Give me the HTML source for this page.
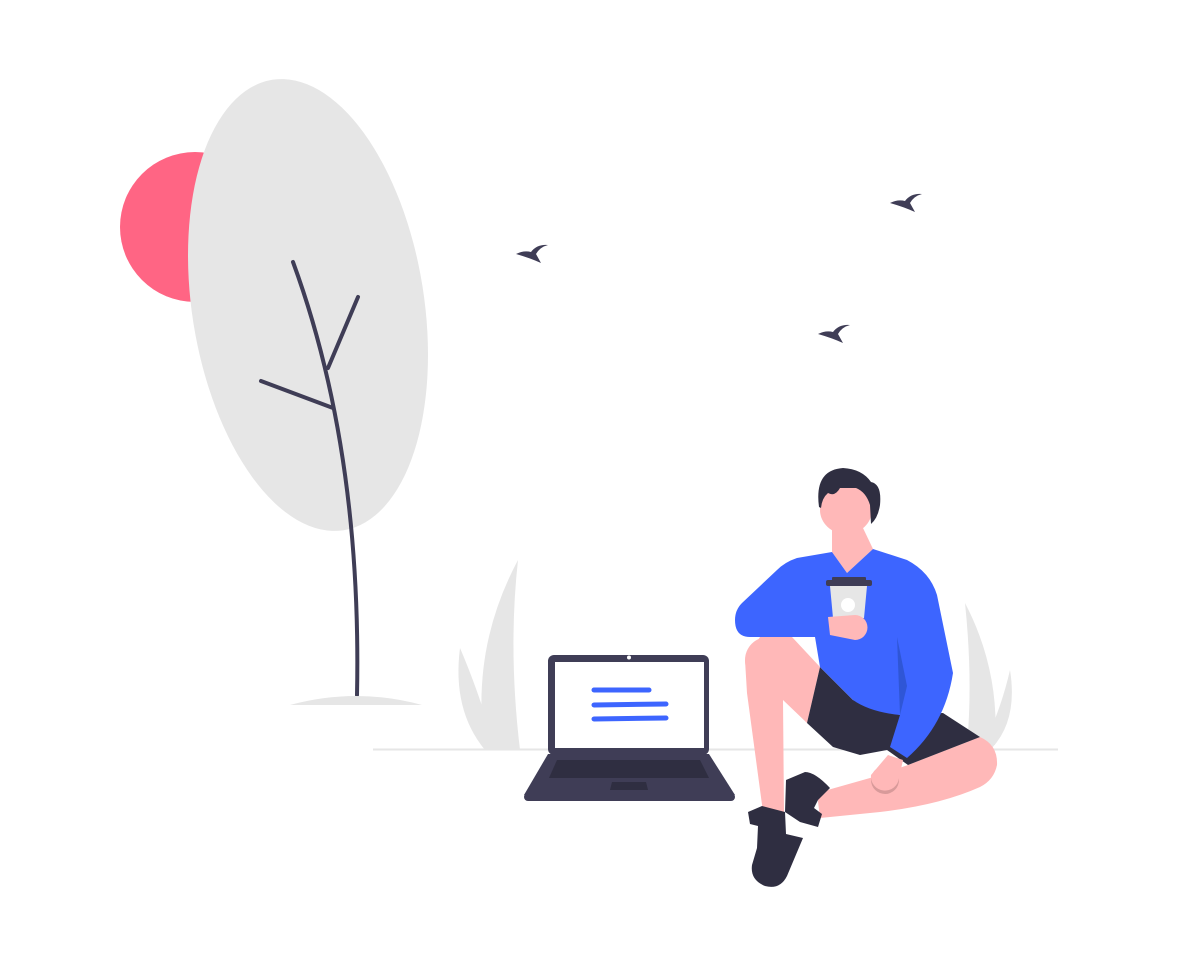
<!DOCTYPE html>
<html><head><meta charset="utf-8"><style>html,body{margin:0;padding:0;background:#fff;}svg{display:block}</style></head>
<body>
<svg width="1179" height="967" viewBox="0 0 1179 967" xmlns="http://www.w3.org/2000/svg">
<circle cx="195" cy="227" r="75" fill="#ff6584"/>
<ellipse cx="308" cy="305" rx="116" ry="228" transform="rotate(-9 308 305)" fill="#e6e6e6"/>
<path d="M293,262 Q362,450 357,695" fill="none" stroke="#3f3d56" stroke-width="4" stroke-linecap="round"/>
<path d="M358,297 L328,368" stroke="#3f3d56" stroke-width="4" stroke-linecap="round"/>
<path d="M261,381 L333,408" stroke="#3f3d56" stroke-width="4" stroke-linecap="round"/>
<path d="M290,705 Q356,687 422,705 Z" fill="#e6e6e6"/>
<line x1="373" y1="749.5" x2="1058" y2="749.5" stroke="#e6e6e6" stroke-width="2"/>
<path d="M518,560 Q470,650 485,750 L520,750 Q508,650 518,560Z" fill="#e6e6e6"/>
<path d="M460,648 Q452,710 485,750 L492,738 Q478,690 460,648Z" fill="#e6e6e6"/>
<path d="M965,603 Q1000,670 995,745 L967,745 Q973,680 965,603Z" fill="#e6e6e6"/>
<path d="M1010,670 Q1018,720 992,748 L987,738 Q1002,705 1010,670Z" fill="#e6e6e6"/>
<g fill="#3f3d56">
<path id="b" d="M516,254 Q524,250 531,252 Q537,244 548,245 Q540,247 536,254 L541,263 Q530,258 516,254Z"/>
<use href="#b" transform="translate(374,-51)"/>
<use href="#b" transform="translate(302,80)"/>
</g>
<rect x="548" y="655" width="161" height="100" rx="6" fill="#3f3d56"/>
<rect x="555" y="662" width="149" height="86" fill="#fff"/>
<circle cx="629" cy="657.5" r="2" fill="#fff"/>
<polygon points="548,754 709,754 735,795 524,795" fill="#3f3d56"/>
<rect x="524" y="793" width="211" height="8" rx="4" fill="#3f3d56"/>
<polygon points="557,760 700,760 709,778 549,778" fill="#2f2e41"/>
<polygon points="612,782 646,782 648,790 610,790" fill="#2f2e41"/>
<g stroke="#3d65ff" stroke-width="5" stroke-linecap="round"><line x1="594" y1="690" x2="649" y2="690"/><line x1="594" y1="705" x2="666" y2="704"/><line x1="594" y1="719" x2="666" y2="718"/></g>
<polygon points="832,528 832,552 847,573 873,549 863,528" fill="#ffb8b8"/>
<ellipse cx="846" cy="510" rx="26" ry="24" fill="#ffb8b8"/>
<path d="M819,507 Q814,470 843,468 Q862,469 871,482 Q882,484 880,505 Q878,518 871,524 L870,505 Q866,492 856,488 L840,488 Q835,497 828,493 Q822,498 821,508Z" fill="#2f2e41"/>
<polygon points="745,660 747,693 763,812 784,813 783,700 807,723 820,667 792,637 760,637" fill="#ffb8b8"/>
<circle cx="768" cy="660" r="23" fill="#ffb8b8"/>
<path d="M908,765 L980,737 Q998,745 997,765 Q994,780 980,787 Q940,805 880,812 L820,818 L817,793 L870,778 Z" fill="#ffb8b8"/>
<polygon points="820,667 807,723 833,747 860,755 887,750 908,765 980,737 943,713 900,715 853,700" fill="#2f2e41"/>
<path d="M832,552 L847,573 L873,549 L907,560 Q930,572 937,595 L953,673 Q945,725 907,758 L890,747 L900,715 Q870,712 853,700 L820,667 L815,637 L750,637 Q735,637 735,620 Q735,610 742,603 L777,570 Q785,562 797,558 Z" fill="#3d65ff"/>
<polygon points="897,637 907,686 900,715" fill="#2f56d6"/>
<rect x="826" y="580" width="46" height="6" rx="2" fill="#3f3d56"/>
<rect x="832" y="577" width="34" height="4" rx="1" fill="#3f3d56"/>
<polygon points="830,586 867,586 864,618 833,618" fill="#e6e6e6"/>
<circle cx="848" cy="605" r="7" fill="#fff"/>
<path d="M828,617 L855,615 A12,12 0 0 1 855,640 L830,635Z" fill="#ffb8b8"/>
<circle cx="885" cy="780" r="14" fill="#d89a9a"/>
<path d="M871,775 L888,755 L903,760 L899,778 A14,14 0 0 1 871,775Z" fill="#ffb8b8"/>
<path d="M748,812 L762,806 L785,812 L786,834 L803,838 L787,876 Q780,890 765,886 Q750,880 752,865 L757,848 L758,826 L750,824Z" fill="#2f2e41"/>
<path d="M786,780 L805,772 Q815,772 830,788 L818,800 L814,808 L822,814 L818,827 L800,822 L785,812Z" fill="#2f2e41"/>
</svg>
</body></html>
